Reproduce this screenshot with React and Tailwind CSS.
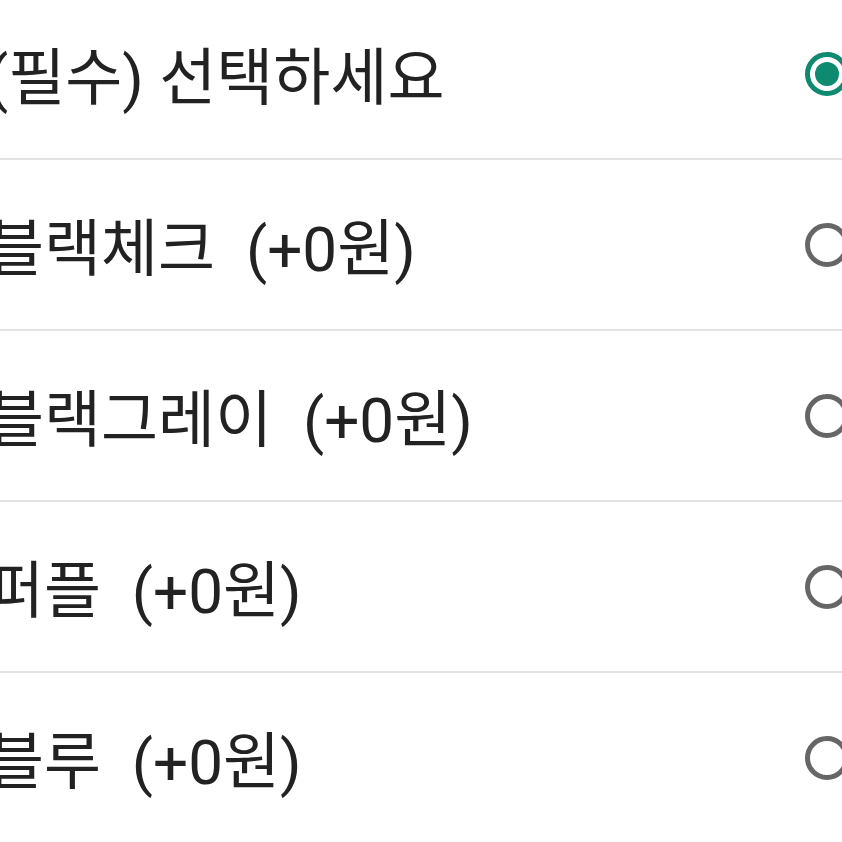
import { useState } from 'react';

const options = [
  '(필수) 선택하세요',
  '블랙체크\u00a0\u00a0(+0원)',
  '블랙그레이\u00a0\u00a0(+0원)',
  '퍼플\u00a0\u00a0(+0원)',
  '블루\u00a0\u00a0(+0원)',
];

const Radio = ({ checked }) => (
  <span
    className={
      'flex h-[44px] w-[44px] shrink-0 items-center justify-center rounded-full border-[5px] ' +
      (checked ? 'border-[#0d8a70]' : 'border-[#666666]')
    }
  >
    {checked && <span className="h-[24px] w-[24px] rounded-full bg-[#0d8a70]" />}
  </span>
);

export default function App() {
  const [selected, setSelected] = useState(0);

  return (
    <div className="h-[842px] w-[842px] overflow-hidden bg-white">
      <div
        className="-mt-[11px] -ml-[13px] -mr-[7px]"
        style={{ fontFamily: 'Roboto, "Noto Sans CJK KR", sans-serif' }}
      >
        {options.map((label, i) => (
          <div
            key={i}
            onClick={() => setSelected(i)}
            className="flex h-[171px] items-center justify-between border-b-[2px] border-[#e2e2e2]"
          >
            <span className="pt-[10px] text-[62px] leading-none text-[#222222] whitespace-pre">{label}</span>
            <Radio checked={selected === i} />
          </div>
        ))}
      </div>
    </div>
  );
}
